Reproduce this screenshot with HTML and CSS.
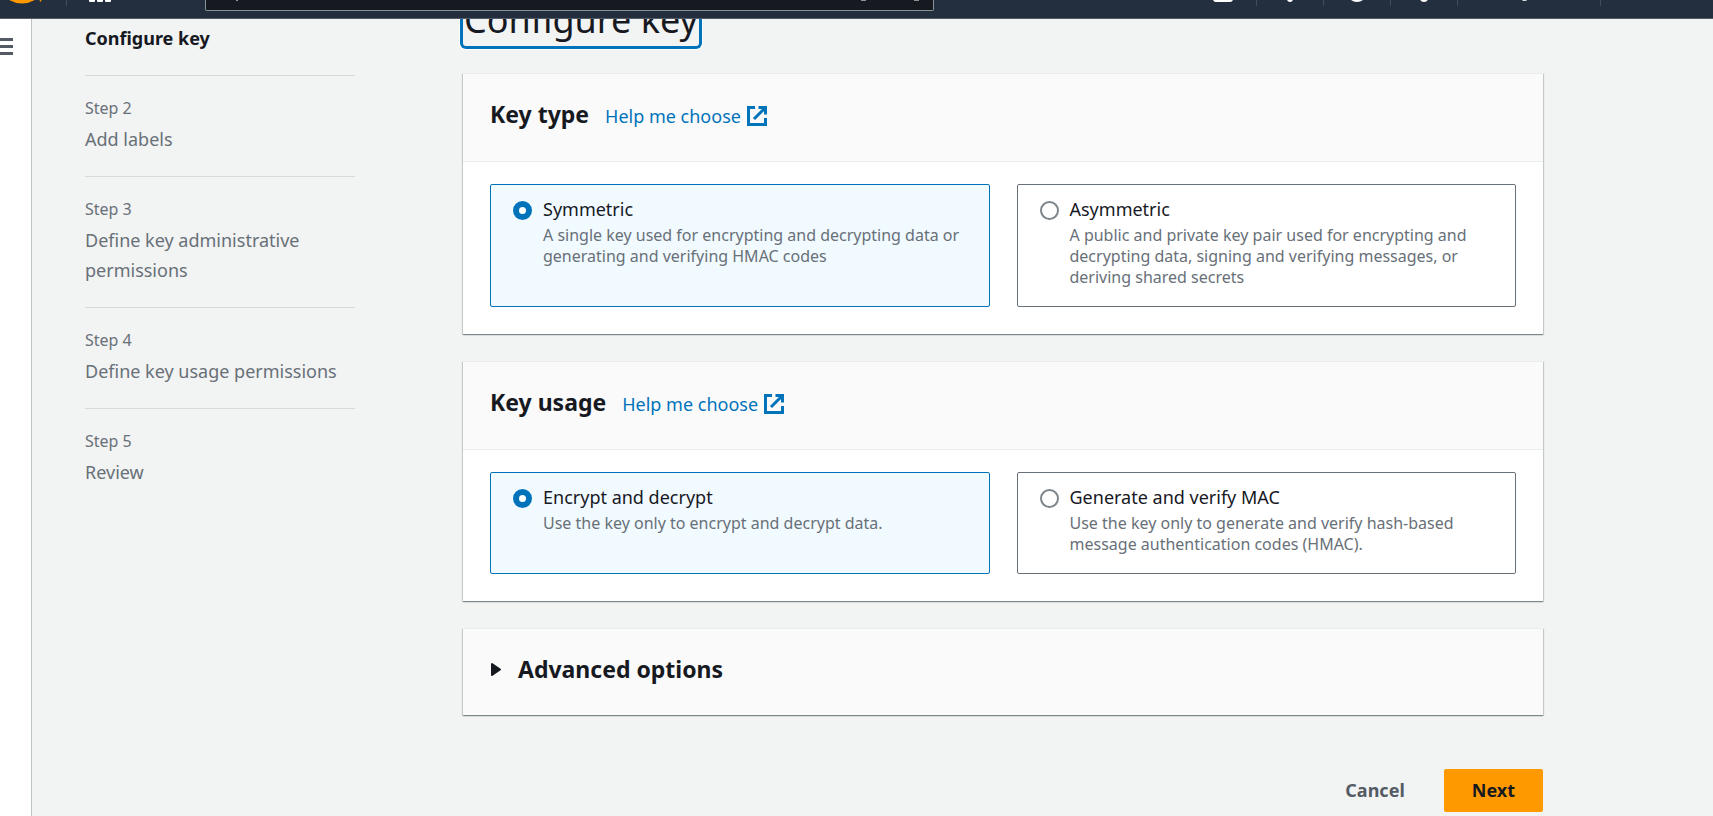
FILE: index.html
```html
<!DOCTYPE html>
<html lang="en">
<head>
<meta charset="utf-8">
<title>Configure key</title>
<link rel="stylesheet" href="styles.css">
</head>
<body>
<header class="topbar">
  <a class="brand" href="#" aria-label="Home">
    <svg width="36" height="6" viewBox="0 0 36 6"><path d="M0-3Q14 6 28-3" fill="none" stroke="#f90" stroke-width="4"/><path d="M32.500-2v3.500" stroke="#f90" stroke-width="1.500"/></svg>
  </a>
  <button class="apps" type="button" aria-label="Services">
    <svg width="22" height="3" viewBox="0 0 22 3" fill="#fff"><rect y="-4" width="6" height="6" rx="1"/><rect x="8" y="-4" width="6" height="6" rx="1"/><rect x="16" y="-4" width="6" height="6" rx="1"/></svg>
  </button>
  <div class="search">
    <svg width="3" height="2" viewBox="0 0 3 2"><path d="M0 0h2v1H0z" fill="#879596"/></svg>
    <svg width="60" height="2" viewBox="0 0 60 2" fill="#879596"><path d="M0 0h5v1H0zM53 0h5v1h-5z"/></svg>
  </div>
  <nav class="tools" aria-label="Tools">
    <button type="button" aria-label="CloudShell"><svg width="20" height="3" viewBox="0 0 20 3"><rect x="1" y="-16" width="18" height="17" rx="2" fill="none" stroke="#fff" stroke-width="2"/></svg></button>
    <button type="button" aria-label="Notifications"><svg width="20" height="3" viewBox="0 0 20 3"><circle cx="10" cy="-1" r="3" fill="#fff"/></svg></button>
    <button type="button" aria-label="Support"><svg width="20" height="3" viewBox="0 0 20 3"><circle cx="10" cy="-8" r="9" fill="none" stroke="#fff" stroke-width="2"/></svg></button>
    <button type="button" aria-label="Settings"><svg width="20" height="3" viewBox="0 0 20 3"><circle cx="10" cy="-2" r="4" fill="#fff"/></svg></button>
    <button type="button" class="region" aria-label="Region"><svg width="6" height="2" viewBox="0 0 6 2"><path d="M0 0h5L4 1H1z" fill="#d5dbdb"/></svg></button>
  </nav>
</header>
<div class="shell">
  <div class="rail">
    <button type="button" class="menu" aria-label="Open navigation"><svg width="14" height="17" viewBox="0 0 14 17" fill="#545b64"><path d="M0 0h13v3H0zM0 7h13v3H0zM0 14h13v3H0z"/></svg></button>
  </div>
  <div class="page">
    <ol class="steps">
      <li class="step current"><span class="step-title">Configure key</span></li>
      <li class="step"><span class="step-label">Step 2</span><span class="step-title">Add labels</span></li>
      <li class="step"><span class="step-label">Step 3</span><span class="step-title">Define key administrative permissions</span></li>
      <li class="step"><span class="step-label">Step 4</span><span class="step-title">Define key usage permissions</span></li>
      <li class="step"><span class="step-label">Step 5</span><span class="step-title">Review</span></li>
    </ol>
    <main class="content">
      <h1 class="title" tabindex="-1">Configure key</h1>
      <form class="form">
        <section class="panel">
          <div class="panel-head">
            <h2>Key type</h2>
            <a href="#">Help me choose<svg width="20" height="20" viewBox="0 0 20 20" fill="none" stroke="#0073bb" stroke-width="3"><path d="M8 1.500H1.500v17h17V12M11.500 1.500h7v7M18 2 7 13"/></svg></a>
          </div>
          <div class="tiles">
            <label class="tile"><input type="radio" name="type" checked><span class="tile-name">Symmetric</span><span class="tile-text">A single key used for encrypting and decrypting data or generating and verifying HMAC codes</span></label>
            <label class="tile"><input type="radio" name="type"><span class="tile-name">Asymmetric</span><span class="tile-text">A public and private key pair used for encrypting and decrypting data, signing and verifying messages, or deriving shared secrets</span></label>
          </div>
        </section>
        <section class="panel">
          <div class="panel-head">
            <h2>Key usage</h2>
            <a href="#">Help me choose<svg width="20" height="20" viewBox="0 0 20 20" fill="none" stroke="#0073bb" stroke-width="3"><path d="M8 1.500H1.500v17h17V12M11.500 1.500h7v7M18 2 7 13"/></svg></a>
          </div>
          <div class="tiles">
            <label class="tile"><input type="radio" name="usage" checked><span class="tile-name">Encrypt and decrypt</span><span class="tile-text">Use the key only to encrypt and decrypt data.</span></label>
            <label class="tile"><input type="radio" name="usage"><span class="tile-name">Generate and verify MAC</span><span class="tile-text">Use the key only to generate and verify hash-based message authentication codes (HMAC).</span></label>
          </div>
        </section>
        <details class="panel">
          <summary class="panel-head"><svg width="12" height="16" viewBox="0 0 12 16"><path d="M2 3v11l8-5.500z" fill="#16191f" stroke="#16191f" stroke-width="2" stroke-linejoin="round"/></svg><h2>Advanced options</h2></summary>
        </details>
        <div class="actions">
          <button type="button" class="btn">Cancel</button>
          <button type="submit" class="btn primary">Next</button>
        </div>
      </form>
    </main>
  </div>
</div>
</body>
</html>
```
FILE: styles.css
```css
* { box-sizing: border-box; }

body {
  margin: 0;
  height: 100vh;
  display: flex;
  flex-direction: column;
  overflow: hidden;
  background: #f2f3f3;
  color: #16191f;
  font: 18px/30px "Noto Sans", "Open Sans", sans-serif;
}

button {
  border: 0;
  padding: 0;
  background: none;
  font: inherit;
  color: inherit;
}

svg { display: block; flex: none; }

h1, h2 { margin: 0; }

/* Top bar */
.topbar {
  position: relative;
  z-index: 1;
  flex: none;
  display: flex;
  align-items: flex-start;
  height: 19px;
  overflow: hidden;
  background: #232f3e;
  border-bottom: 1px solid #545b64;
}

.brand {
  width: 67px;
  height: 6px;
  padding-left: 8px;
  border-right: 1px solid #414d5c;
}

.apps { margin-left: 22px; }

.search {
  flex: 0 1 729px;
  height: 11px;
  margin-left: 94px;
  padding: 0 12px 0 30px;
  display: flex;
  justify-content: space-between;
  background: #16191f;
  border: 1px solid #879596;
  border-top: 0;
  border-radius: 0 0 2px 2px;
}

.tools {
  display: flex;
  margin-left: auto;
  margin-right: 112px;
}

.tools button {
  width: 67px;
  height: 6px;
  display: flex;
  justify-content: center;
  border-right: 1px solid #414d5c;
}

.tools .region { width: 143px; padding-right: 8px; }

/* Page frame */
.shell { flex: 1; display: flex; min-height: 0; }

.rail {
  flex: none;
  width: 32px;
  padding-top: 19px;
  background: #fff;
  border-right: 1px solid #bcc4c5;
}

.menu { display: block; }

.page {
  flex: 1;
  min-width: 0;
  display: flex;
  gap: 108px;
  padding: 0 170px 0 53px;
}

/* Steps */
.steps {
  flex: 0 0 270px;
  margin: 0;
  padding: 0;
  list-style: none;
  color: #687078;
}

.step {
  display: flex;
  flex-direction: column;
  gap: 5px;
  padding: 21px 0 22px;
  border-bottom: 1px solid #d5dbdb;
}

.step:last-child { border-bottom: 0; }

.step.current {
  padding-top: 4px;
  color: #16191f;
  font-weight: 700;
}

.step-label { font-size: 16px; line-height: 22px; }

/* Content */
.content { flex: 1; min-width: 0; }

.title {
  width: fit-content;
  margin-top: -25px;
  margin-bottom: 27px;
  padding: 0 1px;
  border-radius: 3px;
  font-size: 36px;
  font-weight: 400;
  line-height: 52px;
  outline: 0;
  box-shadow: 0 0 0 3px #0073bb, 0 0 0 4px #fff;
}

.form { display: flex; flex-direction: column; }

.panel {
  margin-bottom: 27px;
  background: #fff;
  border-top: 1px solid #eaeded;
  box-shadow: 0 1px 1px rgba(0, 28, 36, 0.3), 1px 1px 1px rgba(0, 28, 36, 0.15), -1px 1px 1px rgba(0, 28, 36, 0.15);
}

.panel-head {
  display: flex;
  align-items: baseline;
  gap: 16px;
  padding: 25px 27px 30px;
  background: #fafafa;
  border-bottom: 1px solid #eaeded;
}

summary.panel-head {
  align-items: center;
  padding-bottom: 31px;
  border-bottom: 0;
  list-style: none;
}

.panel-head h2 { font-size: 23px; line-height: 30px; }

.panel-head a {
  display: flex;
  align-items: center;
  gap: 6px;
  color: #0073bb;
  text-decoration: none;
}

.tiles {
  display: grid;
  grid-template-columns: 1fr 1fr;
  gap: 27px;
  padding: 22px 27px 27px;
}

.tile {
  display: grid;
  grid-template-columns: 19px 1fr;
  align-content: start;
  align-items: center;
  column-gap: 11px;
  padding: 10px 20px 18px 22px;
  border: 1px solid #687078;
  border-radius: 2px;
}

.tile:has(:checked) {
  background: #f1faff;
  border-color: #0073bb;
}

.tile input {
  appearance: none;
  width: 19px;
  height: 19px;
  margin: 0;
  background: #fff;
  border: 2px solid #7d868c;
  border-radius: 50%;
}

.tile input:checked { border: 6px solid #0073bb; }

.tile-name { padding-bottom: 2px; line-height: 28px; }

.tile-text {
  grid-column: 2;
  color: #687078;
  font-size: 16px;
  line-height: 21px;
}

/* Actions */
.actions {
  display: flex;
  justify-content: flex-end;
  gap: 11px;
  padding-top: 27px;
}

.btn {
  height: 43px;
  padding: 0 28px 2px;
  border-radius: 2px;
  color: #545b64;
  font-weight: 700;
}

.primary { background: #f90; color: #16191f; }
```
